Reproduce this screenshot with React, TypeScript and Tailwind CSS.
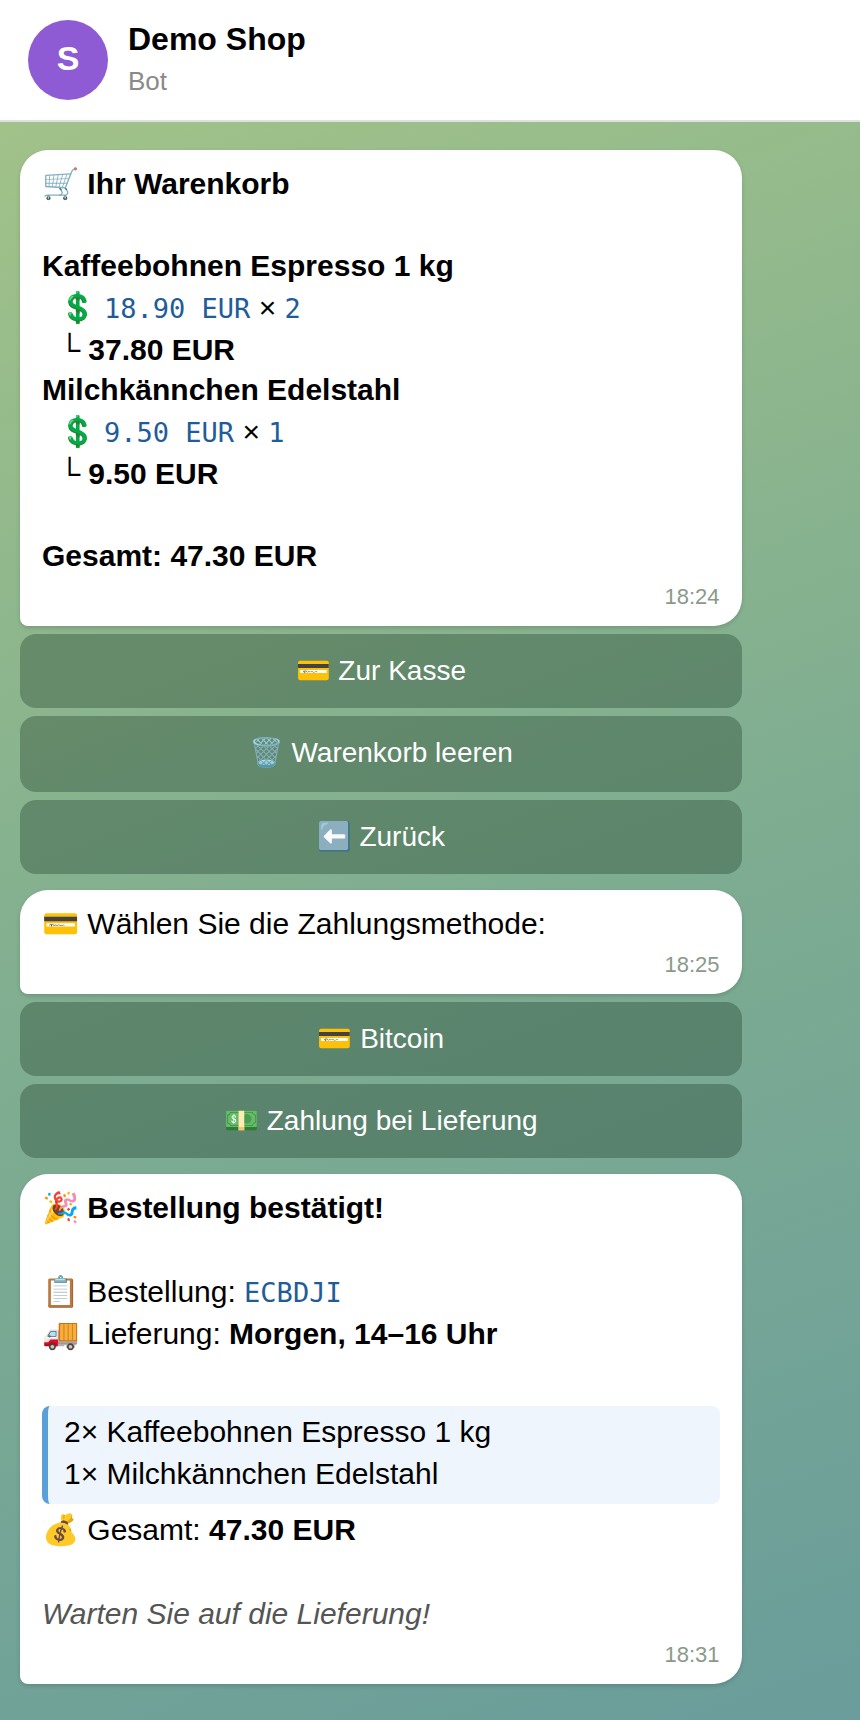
import type { ReactNode } from "react";

function Bubble({ time, children }: { time: string; children: ReactNode }) {
  return (
    <article className="rounded-[28px] rounded-bl-lg bg-white px-[22px] py-[13px] text-[30px] leading-[42px] text-black shadow-[0_2px_4px_rgba(0,0,0,0.15)]">
      {children}
      <time className="mt-1 block text-right text-[22px] leading-8 text-[#8a9a8a]">{time}</time>
    </article>
  );
}

function Code({ children }: { children: ReactNode }) {
  return (
    <code className="font-['DejaVu_Sans_Mono',monospace] text-[27px] leading-none text-[#1f5c99]">{children}</code>
  );
}

function KeyboardButton({ children, tall = false }: { children: ReactNode; tall?: boolean }) {
  return (
    <button
      type="button"
      className={`w-full rounded-2xl bg-[#1e3c28]/35 px-4 pt-[18px] text-center text-[28px] leading-[38px] text-white ${
        tall ? "pb-5" : "pb-[18px]"
      }`}
    >
      {children}
    </button>
  );
}

function CartItem({ name, price, qty, sum }: { name: string; price: string; qty: number; sum: string }) {
  return (
    <>
      <p className="h-10 font-bold leading-[38px]">{name}</p>
      <p className="h-[42px]">
        {"\u00a0\u00a0"}💲 <Code>{price}</Code> × <Code>{qty}</Code>
      </p>
      <p className="h-[42px]">
        {"\u00a0\u00a0"}└ <b>{sum}</b>
      </p>
    </>
  );
}

// empty line inside a message
function Blank() {
  return <div className="h-[42px]" />;
}

export default function App() {
  return (
    <div className="flex min-h-screen flex-col font-['Liberation_Sans',Arial,sans-serif]">
      <header className="flex items-center gap-5 border-b-2 border-[#e0e0e0] bg-white px-7 py-5">
        <div className="flex size-20 shrink-0 items-center justify-center rounded-full bg-[#8e5bd4] pb-1 text-[34px] font-bold leading-10 text-white">
          S
        </div>
        <div className="flex flex-col gap-1.5">
          <h1 className="text-[32px] font-bold leading-9 text-black">Demo Shop</h1>
          <p className="text-[26px] leading-9 text-[#8a8a8a]">Bot</p>
        </div>
      </header>

      <main className="flex flex-1 flex-col gap-4 bg-[linear-gradient(160deg,#a1c289_0%,#7fad91_50%,#6a9d9b_100%)] px-5 pb-9 pt-7">
        <section className="flex w-[88%] flex-col gap-2">
          <Bubble time="18:24">
            <p className="h-[42px]">
              🛒 <b>Ihr Warenkorb</b>
            </p>
            <Blank />
            <CartItem name="Kaffeebohnen Espresso 1 kg" price="18.90 EUR" qty={2} sum="37.80 EUR" />
            <CartItem name="Milchkännchen Edelstahl" price="9.50 EUR" qty={1} sum="9.50 EUR" />
            <Blank />
            <p className="h-10 font-bold leading-[38px]">Gesamt: 47.30 EUR</p>
          </Bubble>
          <KeyboardButton>💳 Zur Kasse</KeyboardButton>
          <KeyboardButton tall>🗑️ Warenkorb leeren</KeyboardButton>
          <KeyboardButton>⬅️ Zurück</KeyboardButton>
        </section>

        <section className="flex w-[88%] flex-col gap-2">
          <Bubble time="18:25">
            <p className="h-[42px]">💳 Wählen Sie die Zahlungsmethode:</p>
          </Bubble>
          <KeyboardButton>💳 Bitcoin</KeyboardButton>
          <KeyboardButton>💵 Zahlung bei Lieferung</KeyboardButton>
        </section>

        <section className="flex w-[88%] flex-col gap-2">
          <Bubble time="18:31">
            <p className="h-[42px]">
              🎉 <b>Bestellung bestätigt!</b>
            </p>
            <Blank />
            <p className="h-[42px]">
              📋 Bestellung: <Code>ECBDJI</Code>
            </p>
            <p className="h-[42px]">
              🚚 Lieferung: <b>Morgen, 14–16 Uhr</b>
            </p>
            <Blank />
            <blockquote className="mb-[5px] mt-[9px] rounded-lg border-l-[6px] border-[#5a9fd8] bg-[#eef5fc] px-4 pb-[9px] pt-[5px]">
              <p>2× Kaffeebohnen Espresso 1 kg</p>
              <p>1× Milchkännchen Edelstahl</p>
            </blockquote>
            <p className="h-[42px]">
              💰 Gesamt: <b>47.30 EUR</b>
            </p>
            <Blank />
            <p className="h-[42px] italic text-[#555555]">Warten Sie auf die Lieferung!</p>
          </Bubble>
        </section>
      </main>
    </div>
  );
}
